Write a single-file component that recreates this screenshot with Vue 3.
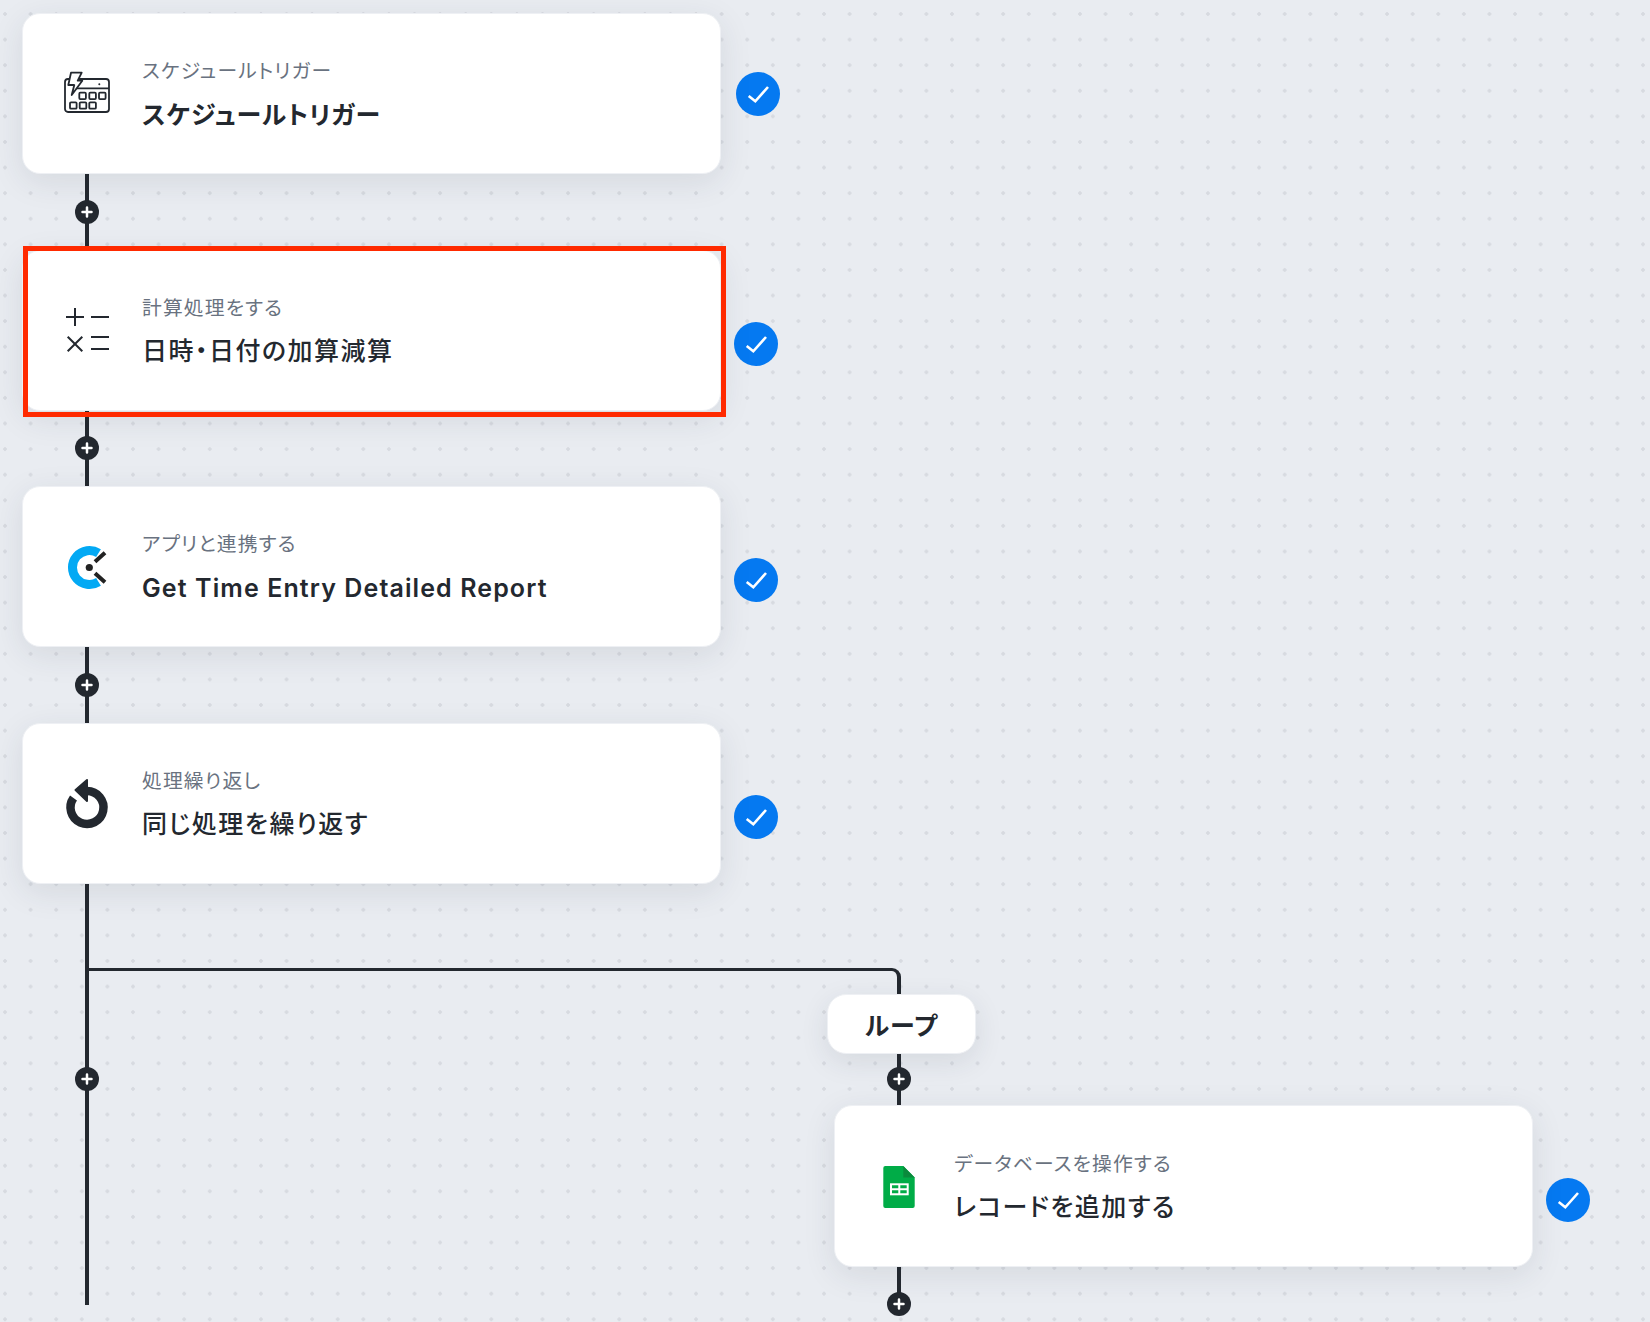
<template>
  <div class="canvas">
    <div class="step">
      <div class="card">
        <div class="icon">
          <svg viewBox="0 1 46 46" fill="none" stroke="#23282f" stroke-width="1.8">
            <rect x="1" y="9" width="44" height="33" rx="3" />
            <path d="M10 18.3H45" />
            <path d="M7 2.7H17.7L13.7 10.7H18.3L7.7 25L10.3 15H4.3Z" fill="#fff" stroke-linejoin="round" />
            <circle cx="35.3" cy="14.3" r="1" fill="#23282f" stroke="none" />
            <rect x="15.3" y="22.7" width="6.6" height="6.4" rx="1" />
            <rect x="25.3" y="22.7" width="6.6" height="6.4" rx="1" />
            <rect x="35" y="22.7" width="6.6" height="6.4" rx="1" />
            <rect x="6" y="32.3" width="6.6" height="6.4" rx="1" />
            <rect x="15.7" y="32.3" width="6.6" height="6.4" rx="1" />
            <rect x="25.3" y="32.3" width="6.6" height="6.4" rx="1" />
          </svg>
        </div>
        <div class="text">
          <p class="label">スケジュールトリガー</p>
          <p class="title heavy">スケジュールトリガー</p>
        </div>
      </div>
      <div class="check first">
        <svg viewBox="0 0 44 44"><path d="M12.7 24L19.3 29.3L32 15" /></svg>
      </div>
    </div>

    <div class="link"><span class="plus"><svg viewBox="0 0 24 24"><path d="M12 7.5V16.5M7.5 12H16.5" /></svg></span></div>

    <div class="step">
      <div class="card selected">
        <div class="icon">
          <svg viewBox="0 1 46 46" fill="none" stroke="#23282f" stroke-width="2">
            <path d="M2 11H20M11 2V20M27 11H45" />
            <path d="M3.7 30.7L18.3 45.3M18.3 30.7L3.7 45.3" />
            <path d="M27 31H45M27 43H45" />
          </svg>
        </div>
        <div class="text">
          <p class="label">計算処理をする</p>
          <p class="title">日時・日付の加算減算</p>
        </div>
        <div class="highlight"></div>
      </div>
      <div class="check">
        <svg viewBox="0 0 44 44"><path d="M12.7 24L19.3 29.3L32 15" /></svg>
      </div>
    </div>

    <div class="link"><span class="plus"><svg viewBox="0 0 24 24"><path d="M12 7.5V16.5M7.5 12H16.5" /></svg></span></div>

    <div class="step">
      <div class="card">
        <div class="icon">
          <svg viewBox="0 0 46 46" fill="none">
            <path d="M34.5 9.1A17 17 0 1 0 34.5 37.9" stroke="#03a9f4" stroke-width="9" />
            <circle cx="25.3" cy="23.5" r="3.6" fill="#222" />
            <path d="M31 17.7L41 8.7M31 29.3L41 38.3" stroke="#222" stroke-width="4" />
          </svg>
        </div>
        <div class="text">
          <p class="label">アプリと連携する</p>
          <p class="title latin">Get Time Entry Detailed Report</p>
        </div>
      </div>
      <div class="check">
        <svg viewBox="0 0 44 44"><path d="M12.7 24L19.3 29.3L32 15" /></svg>
      </div>
    </div>

    <div class="link"><span class="plus"><svg viewBox="0 0 24 24"><path d="M12 7.5V16.5M7.5 12H16.5" /></svg></span></div>

    <div class="step">
      <div class="card">
        <div class="icon">
          <svg viewBox="0 0 46 46" fill="none">
            <path d="M23 11A16.5 16.5 0 1 1 9.5 18" stroke="#23282f" stroke-width="8.5" />
            <path d="M11.5 10L23 0V21Z" fill="#23282f" stroke="#23282f" stroke-width="2" stroke-linejoin="round" />
          </svg>
        </div>
        <div class="text">
          <p class="label">処理繰り返し</p>
          <p class="title">同じ処理を繰り返す</p>
        </div>
      </div>
      <div class="check">
        <svg viewBox="0 0 44 44"><path d="M12.7 24L19.3 29.3L32 15" /></svg>
      </div>
    </div>

    <div class="branch">
      <div class="rail">
        <span class="plus"><svg viewBox="0 0 24 24"><path d="M12 7.5V16.5M7.5 12H16.5" /></svg></span>
      </div>
      <div class="elbow"></div>
      <div class="lane">
        <div class="pill">ループ</div>
        <div class="link short"><span class="plus"><svg viewBox="0 0 24 24"><path d="M12 7.5V16.5M7.5 12H16.5" /></svg></span></div>
        <div class="step">
          <div class="card">
            <div class="icon">
              <svg viewBox="0 0 46 46">
                <path d="M9.3 3H27.3L38.7 14.4V43A2 2 0 0 1 36.7 45H9.3A2 2 0 0 1 7.3 43V5A2 2 0 0 1 9.3 3Z" fill="#00ac47" />
                <path d="M27.3 3L38.7 14.4H27.3Z" fill="#0a8a3c" />
                <rect x="14" y="20.3" width="18.7" height="12" fill="#fff" />
                <path d="M16 22.3H22.3V25.3H16ZM24.3 22.3H30.7V25.3H24.3ZM16 27.3H22.3V30.3H16ZM24.3 27.3H30.7V30.3H24.3Z" fill="#00ac47" />
              </svg>
            </div>
            <div class="text">
              <p class="label">データベースを操作する</p>
              <p class="title">レコードを追加する</p>
            </div>
          </div>
          <div class="check">
            <svg viewBox="0 0 44 44"><path d="M12.7 24L19.3 29.3L32 15" /></svg>
          </div>
        </div>
        <div class="link tail"><span class="plus"><svg viewBox="0 0 24 24"><path d="M12 7.5V16.5M7.5 12H16.5" /></svg></span></div>
      </div>
    </div>
  </div>
</template>

<script setup>
</script>

<style>
html,
body {
  margin: 0;
  background: #e9ecf1;
}
</style>

<style scoped>
.canvas {
  box-sizing: border-box;
  width: 1650px;
  height: 1322px;
  padding: 13px 0 0 22px;
  overflow: hidden;
  background-color: #e9ecf1;
  background-image: radial-gradient(circle at center, #d7dae0 1.5px, transparent 2.1px);
  background-size: 25.6px 25.6px;
  background-position: -7.8px 1.2px;
  font-family: Inter, "Noto Sans CJK JP", sans-serif;
  font-feature-settings: "palt";
  color: #23282f;
}
.step {
  display: flex;
  align-items: center;
  gap: 13px;
}
.card {
  position: relative;
  display: flex;
  align-items: center;
  gap: 32px;
  box-sizing: border-box;
  width: 699px;
  height: 161px;
  padding-left: 41px;
  background: #fff;
  border: 1px solid #eef0f4;
  border-radius: 18px;
  box-shadow: 0 8px 32px rgba(40, 50, 70, 0.1);
}
.lane .card {
  height: 162px;
}
.icon {
  flex: none;
  width: 46px;
  height: 46px;
}
.icon svg {
  display: block;
  width: 46px;
  height: 46px;
  overflow: visible;
}
.text {
  display: flex;
  flex-direction: column;
  gap: 12.5px;
  margin-top: 3.5px;
}
.label {
  margin: 0;
  font-size: 19.8px;
  line-height: 26px;
  letter-spacing: 0.058em;
  color: #697280;
}
.title {
  margin: 0;
  font-size: 25px;
  line-height: 36px;
  font-weight: 500;
  letter-spacing: 0.06em;
}
.title.heavy {
  font-weight: 600;
  letter-spacing: 0.035em;
}
.title.latin {
  font-weight: 600;
  letter-spacing: 0.044em;
}
.highlight {
  position: absolute;
  top: -5px;
  left: 0;
  right: -6px;
  bottom: -7px;
  border: 5px solid #ff2a00;
}
.check {
  flex: none;
  width: 44px;
  height: 44px;
  margin-top: 27px;
  border-radius: 50%;
  background: #0579f1;
}
.check.first {
  margin-top: 0;
  margin-left: 2px;
}
.check svg {
  display: block;
  width: 44px;
  height: 44px;
  fill: none;
  stroke: #fff;
  stroke-width: 2.6;
}
.link {
  display: flex;
  align-items: center;
  justify-content: center;
  width: 4px;
  height: 75.5px;
  margin-left: 63px;
  background: #23282f;
}
.link.short {
  height: 51.5px;
}
.link.tail {
  height: 37px;
  align-items: flex-end;
}
.plus {
  flex: none;
  width: 24px;
  height: 24px;
  border-radius: 50%;
  background: #23282f;
}
.plus svg {
  display: block;
  width: 24px;
  height: 24px;
  fill: none;
  stroke: #fff;
  stroke-width: 2.5;
  stroke-linecap: round;
}
.link.tail .plus {
  margin-bottom: -12px;
}
.branch {
  display: grid;
  grid-template-columns: 812px 1fr;
  grid-template-rows: 110px auto;
}
.rail {
  grid-column: 1;
  grid-row: 1 / 3;
  position: relative;
  z-index: 1;
  display: flex;
  justify-content: center;
  box-sizing: border-box;
  width: 4px;
  height: 421px;
  margin-left: 63px;
  padding-top: 183.5px;
  background: #23282f;
}
.elbow {
  grid-column: 1 / 3;
  grid-row: 1;
  box-sizing: border-box;
  width: 816px;
  height: 26px;
  margin: 84px 0 0 63px;
  border-top: 3px solid #23282f;
  border-right: 4px solid #23282f;
  border-top-right-radius: 9px;
}
.lane {
  grid-column: 2;
  grid-row: 2;
}
.pill {
  display: flex;
  align-items: center;
  justify-content: center;
  box-sizing: border-box;
  width: 149px;
  height: 60px;
  margin-left: -7px;
  background: #fff;
  border: 1px solid #eef0f4;
  border-radius: 19px;
  box-shadow: 0 8px 28px rgba(40, 50, 70, 0.1);
  font-size: 25px;
  font-weight: 600;
  letter-spacing: 0.04em;
}
</style>
